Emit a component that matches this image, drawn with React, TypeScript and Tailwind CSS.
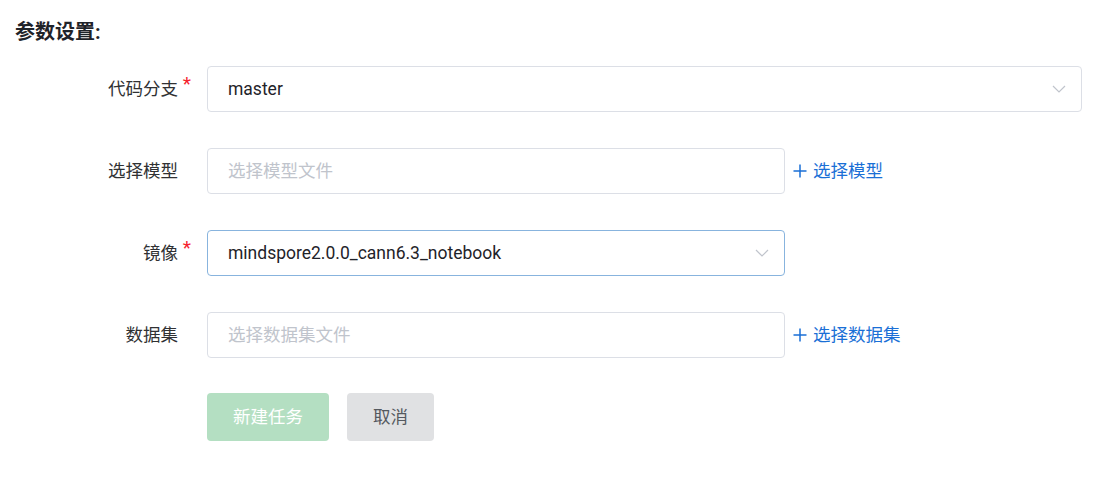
function Label({ text, required }: { text: string; required?: boolean }) {
  return (
    <div className="relative w-[178px] shrink-0 text-right text-[17.5px] text-[#303133]">
      {text}
      {required && (
        <span className="absolute -right-[13px] -top-[6px] text-[19px] text-[#f5222d]">*</span>
      )}
    </div>
  );
}

function Chevron() {
  return (
    <svg width="14" height="8" viewBox="0 0 14 8" fill="none">
      <polyline points="1,1 7,7 13,1" stroke="#c0c4cc" strokeWidth="1.2" />
    </svg>
  );
}

function Field({
  value,
  placeholder,
  select,
  active,
  className,
}: {
  value?: string;
  placeholder?: string;
  select?: boolean;
  active?: boolean;
  className: string;
}) {
  return (
    <div
      className={`flex h-[46px] items-center justify-between rounded-[4px] border bg-white pl-5 pr-[15px] text-[17.5px] ${
        active ? "border-[#88b4de]" : "border-[#dcdfe6]"
      } ${className}`}
    >
      <span className={value ? "text-[#1f2329]" : "text-[#c0c4cc]"}>{value || placeholder}</span>
      {select && <Chevron />}
    </div>
  );
}

function AddLink({ text }: { text: string }) {
  return (
    <button className="ml-[8px] flex items-center gap-[6px] text-[17.5px] text-[#1a6fd6]">
      <svg width="14" height="14" viewBox="0 0 14 14">
        <path d="M7 0.5V13.5M0.5 7H13.5" stroke="currentColor" strokeWidth="1.5" />
      </svg>
      {text}
    </button>
  );
}

export default function App() {
  return (
    <div
      className="min-h-[490px] w-[1101px] bg-white pt-[20px]"
      style={{ fontFamily: "Roboto, 'Noto Sans CJK SC', sans-serif" }}
    >
      <h2 className="pl-[15px] text-[20px] font-bold leading-6 text-[#1f2329]">参数设置:</h2>

      <div className="mt-[22px] flex flex-col gap-[36px]">
        <div className="flex items-center gap-[29px]">
          <Label text="代码分支" required />
          <Field value="master" select className="w-[875px]" />
        </div>

        <div className="flex items-center gap-[29px]">
          <Label text="选择模型" />
          <div className="flex items-center">
            <Field placeholder="选择模型文件" className="w-[578px]" />
            <AddLink text="选择模型" />
          </div>
        </div>

        <div className="flex items-center gap-[29px]">
          <Label text="镜像" required />
          <Field value="mindspore2.0.0_cann6.3_notebook" select active className="w-[578px]" />
        </div>

        <div className="flex items-center gap-[29px]">
          <Label text="数据集" />
          <div className="flex items-center">
            <Field placeholder="选择数据集文件" className="w-[578px]" />
            <AddLink text="选择数据集" />
          </div>
        </div>

        <div className="-mt-px flex items-center gap-[18px] pl-[207px]">
          <button className="h-[48px] w-[122px] rounded-[4px] bg-[#b4dfc2] text-[17.5px] text-white">
            新建任务
          </button>
          <button className="h-[48px] w-[87px] rounded-[4px] bg-[#e0e1e3] text-[17.5px] text-[#55595f]">
            取消
          </button>
        </div>
      </div>
    </div>
  );
}
